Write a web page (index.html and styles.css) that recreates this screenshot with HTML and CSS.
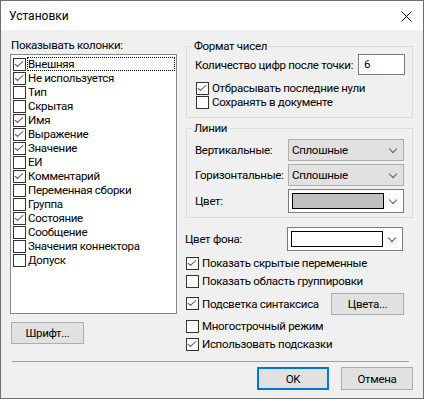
FILE: index.html
```html
<!DOCTYPE html>
<html lang="ru">
<head>
    <meta charset="UTF-8">
    <title>Установки</title>
    <link rel="stylesheet" href="styles.css">
</head>
<body>

    <div class="window">
        <div class="titlebar">
            <span class="title">Установки</span>
            <svg class="close" width="11" height="11" viewBox="0 0 11 11">
                <path d="M0.5 0.5 L10.5 10.5 M10.5 0.5 L0.5 10.5" stroke="#000" stroke-width="1" fill="none"/>
            </svg>
        </div>

        <div class="dialog-body">
            <div class="columns">
                <!-- Left: column list -->
                <div class="left">
                    <div class="caption">Показывать колонки:</div>
                    <ul class="column-list">
                        <li class="row focused"><span class="check on"></span><span class="row-text">Внешняя</span></li>
                        <li class="row"><span class="check on"></span><span class="row-text">Не используется</span></li>
                        <li class="row"><span class="check"></span><span class="row-text">Тип</span></li>
                        <li class="row"><span class="check"></span><span class="row-text">Скрытая</span></li>
                        <li class="row"><span class="check on"></span><span class="row-text">Имя</span></li>
                        <li class="row"><span class="check on"></span><span class="row-text">Выражение</span></li>
                        <li class="row"><span class="check on"></span><span class="row-text">Значение</span></li>
                        <li class="row"><span class="check"></span><span class="row-text">ЕИ</span></li>
                        <li class="row"><span class="check on"></span><span class="row-text">Комментарий</span></li>
                        <li class="row"><span class="check"></span><span class="row-text">Переменная сборки</span></li>
                        <li class="row"><span class="check"></span><span class="row-text">Группа</span></li>
                        <li class="row"><span class="check on"></span><span class="row-text">Состояние</span></li>
                        <li class="row"><span class="check"></span><span class="row-text">Сообщение</span></li>
                        <li class="row"><span class="check"></span><span class="row-text">Значения коннектора</span></li>
                        <li class="row"><span class="check"></span><span class="row-text">Допуск</span></li>
                    </ul>
                    <button class="btn font-btn">Шрифт...</button>
                </div>

                <!-- Right: settings -->
                <div class="right">
                    <fieldset class="group number-group">
                        <legend>Формат чисел</legend>
                        <div class="field-row">
                            <span>Количество цифр после точки:</span>
                            <span class="num-input">6</span>
                        </div>
                        <div class="check-rows">
                            <label class="check-row"><span class="check on"></span>Отбрасывать последние нули</label>
                            <label class="check-row"><span class="check"></span>Сохранять в документе</label>
                        </div>
                    </fieldset>

                    <fieldset class="group lines-group">
                        <legend>Линии</legend>
                        <div class="combo-row">
                            <span class="combo-label">Вертикальные:</span>
                            <span class="combo"><span class="combo-text">Сплошные</span><span class="chevron"></span></span>
                        </div>
                        <div class="combo-row">
                            <span class="combo-label">Горизонтальные:</span>
                            <span class="combo"><span class="combo-text">Сплошные</span><span class="chevron"></span></span>
                        </div>
                        <div class="combo-row">
                            <span class="combo-label">Цвет:</span>
                            <span class="combo color-combo"><span class="swatch gray"></span><span class="chevron"></span></span>
                        </div>
                    </fieldset>

                    <div class="combo-row bg-row">
                        <span class="combo-label">Цвет фона:</span>
                        <span class="combo color-combo"><span class="swatch"></span><span class="chevron"></span></span>
                    </div>

                    <div class="options">
                        <label class="opt-row"><span class="check on"></span>Показать скрытые переменные</label>
                        <label class="opt-row"><span class="check"></span>Показать область группировки</label>
                        <div class="opt-row syntax-row">
                            <label class="opt-inline"><span class="check on"></span>Подсветка синтаксиса</label>
                            <button class="btn colors-btn">Цвета...</button>
                        </div>
                        <label class="opt-row"><span class="check"></span>Многострочный режим</label>
                        <label class="opt-row"><span class="check on"></span>Использовать подсказки</label>
                    </div>
                </div>
            </div>

            <div class="separator"></div>

            <div class="footer">
                <button class="btn ok-btn">OK</button>
                <button class="btn">Отмена</button>
            </div>
        </div>
    </div>

</body>
</html>
```

FILE: styles.css
```css
/* Classic dialog look */
:root {
    --face: #f0f0f0;
    --text: #000000;
    --btn-face: #e1e1e1;
    --btn-border: #adadad;
    --group-border: #dcdcdc;
    --accent: #0078d7;
}
html, body { margin: 0; padding: 0; }
body {
    font-family: Roboto, 'Liberation Sans', sans-serif;
    font-size: 11.5px;
    letter-spacing: -0.3px;
    line-height: 16px;
    color: var(--text);
    background: #ffffff;
    white-space: nowrap;
}
.window {
    width: 424px; height: 399px; box-sizing: border-box;
    border: 1px solid #6f6f6f; background: var(--face);
    display: flex; flex-direction: column;
}
.titlebar {
    height: 29px; background: #ffffff; flex-shrink: 0;
    display: flex; align-items: center; justify-content: space-between;
    padding: 0 11px 0 8px;
}
.title { font-size: 12px; letter-spacing: 0; }
.close { display: block; margin-top: 1px; }

.dialog-body { flex: 1; display: flex; flex-direction: column; padding: 7px 10px 8px 9px; }
.columns { flex: 1; display: flex; gap: 9px; }

/* Checkbox */
.check {
    width: 13px; height: 13px; box-sizing: border-box; flex-shrink: 0;
    border: 1px solid #333333; background: #ffffff; display: inline-block;
    position: relative;
}
.check.on::after { /* check mark */
    content: ''; position: absolute; left: 3px; top: 0px;
    width: 3px; height: 7px;
    border: solid #5a5a5a; border-width: 0 1px 1px 0;
    transform: rotate(40deg) skewX(-8deg);
}

/* Left column */
.left { width: 168px; display: flex; flex-direction: column; }
.caption { height: 17px; line-height: 17px; margin-left: 1px; }
.column-list {
    list-style: none; margin: 0; padding: 2px 1px 0 2px;
    height: 260px; box-sizing: border-box;
    border: 1px solid #828790; background: #ffffff;
}
.column-list .row { display: flex; align-items: center; height: 14px; }
.row-text { flex: 1; margin-left: 1px; padding-left: 1px; line-height: 14px; height: 14px; box-sizing: border-box; }
.row.focused .row-text { outline: 1px dotted #000; outline-offset: -1px; }
.font-btn { width: 73px; margin: 8px 0 0 1px; }

/* Buttons */
.btn {
    font-family: inherit; font-size: 11.5px; letter-spacing: -0.3px; color: var(--text);
    background: var(--btn-face); border: 1px solid var(--btn-border);
    height: 22px; padding: 0; box-sizing: border-box; border-radius: 0;
}

/* Right column */
.right { width: 228px; margin-top: 1px; display: flex; flex-direction: column; }
.group {
    margin: 0; padding: 0 8px 8px 8px;
    border: 1px solid var(--group-border); min-width: 0;
}
.group legend { padding: 0 2px; margin-left: -3px; line-height: 16px; }
.field-row { display: flex; align-items: center; justify-content: space-between; height: 21px; }
.num-input {
    width: 47px; height: 21px; box-sizing: border-box; flex-shrink: 0;
    border: 1px solid #7a7a7a; background: #ffffff;
    padding-left: 5px; line-height: 19px; margin-right: -1px;
}
.check-rows { margin-top: 6px; }
.check-row { display: flex; align-items: center; height: 14px; gap: 3px; margin-left: 1px; }

.lines-group { margin-top: 2px; padding-bottom: 4px; }
.combo-row { display: flex; align-items: center; margin-top: 3px; }
.combo-label { width: 93px; flex-shrink: 0; }
.combo {
    width: 116px; height: 22px; box-sizing: border-box; flex-shrink: 0;
    background: var(--btn-face); border: 1px solid var(--btn-border);
    display: flex; align-items: center; justify-content: space-between;
    padding: 0 5px 0 3px;
}
.color-combo { height: 24px; background: #ffffff; border-color: #7a7a7a; padding-left: 3px; }
.swatch {
    width: 92px; height: 16px; box-sizing: border-box;
    border: 1px solid #000; background: #ffffff;
}
.swatch.gray { background: #c0c0c0; }
.chevron {
    width: 5px; height: 5px; margin: 0 2px 3px 0;
    border: solid #606060; border-width: 0 1px 1px 0;
    transform: rotate(45deg);
}

.bg-row { margin-top: 9px; }
.bg-row .combo-label { width: 102px; margin-left: -1px; }

.options { margin-top: 3px; }
.opt-row, .opt-inline { display: flex; align-items: center; gap: 3px; }
.opt-row { height: 18px; }
.syntax-row { height: 23px; justify-content: space-between; margin: 2px 0; }
.colors-btn { width: 73px; margin-right: 9px; }

.separator { height: 1px; background: #a0a0a0; margin: 0 4px 5px 2px; }
.footer { display: flex; justify-content: flex-end; gap: 12px; }
.footer .btn { width: 72px; height: 23px; }
.ok-btn { border: 2px solid var(--accent); }
```
